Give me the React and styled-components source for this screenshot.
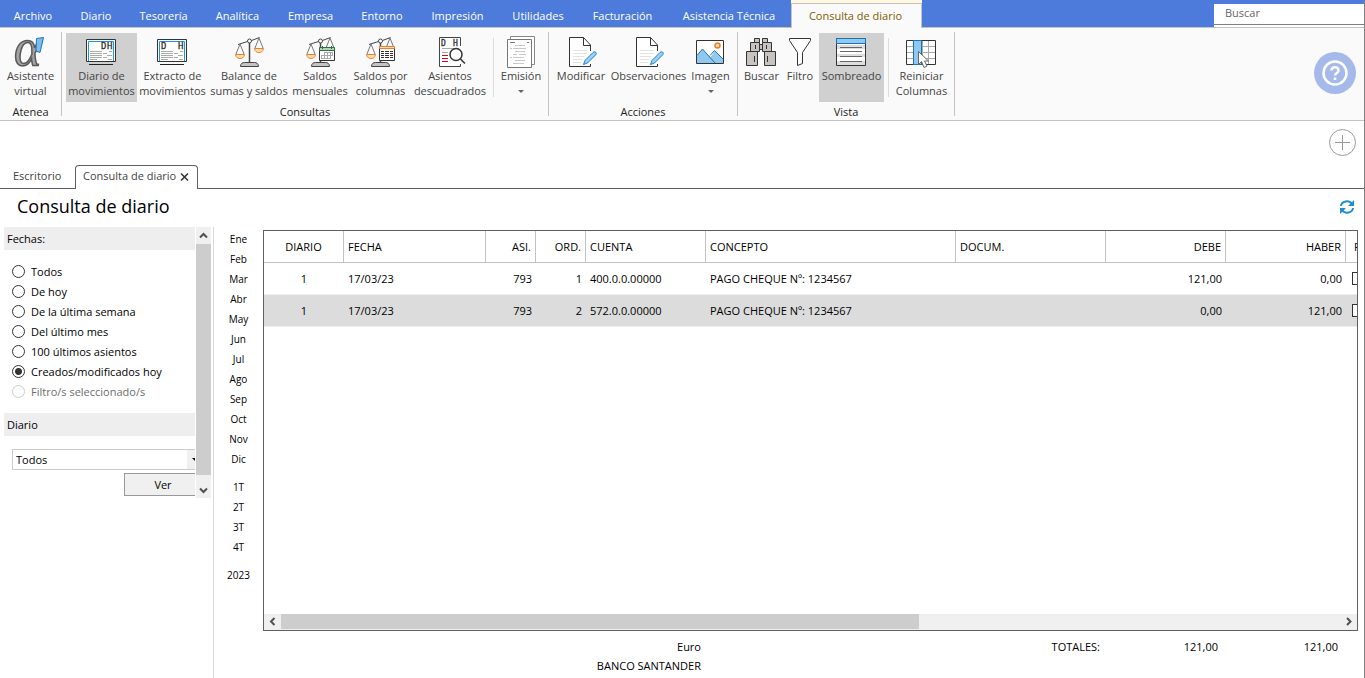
import { useState } from 'react'
import styled, { createGlobalStyle } from 'styled-components'

const GlobalStyle = createGlobalStyle`
  * {
    box-sizing: border-box;
  }

  body {
    margin: 0;
    background: #fff;
    color: #000;
    font-family: 'Open Sans', 'Noto Sans', sans-serif;
    font-size: 11px;
    line-height: 15px;
  }

  button,
  input,
  select {
    margin: 0;
    padding: 0;
    border: 0;
    background: none;
    color: inherit;
    font: inherit;
  }

  svg {
    display: block;
    flex: none;
  }
`

const Page = styled.div`
  display: flex;
  flex-direction: column;
  min-height: 100vh;
  border-right: 1px solid #808080;
`

/* top menu */

const MenuBar = styled.nav`
  display: flex;
  height: 28px;
  background: #4d7bdc;
  border-bottom: 1px solid #c3c3c3;
`

const MenuItem = styled.button`
  flex: none;
  width: ${p => p.$width}px;
  height: 27px;
  padding-top: 3px;
  color: #fff;
  white-space: nowrap;
`

const ActiveMenu = styled.div`
  flex: none;
  width: 131px;
  height: 28px;
  padding-top: 3px;
  background: #fff8e1;
`

const ActiveMenuItem = styled.button`
  width: 100%;
  height: 25px;
  padding: 0 2px 2px 0;
  background: #fafafa;
  border: 1px solid #c3c3c3;
  border-bottom: 0;
  color: #7f6000;
`

const SearchWrap = styled.div`
  width: 150px;
  height: 23px;
  margin: 4px 0 0 auto;
  background: #fff;
`

const SearchInput = styled.input`
  display: block;
  width: 100%;
  height: 21px;
  padding: 0 11px 4px;
  border-bottom: 1px solid #808080;
  outline: none;

  &::placeholder {
    color: #666;
    opacity: 1;
  }
`

/* ribbon */

const Ribbon = styled.div`
  display: flex;
  height: 93px;
  background: #fafafa;
  border-bottom: 1px solid #c3c3c3;
`

const Group = styled.section`
  flex: none;
  display: flex;
  flex-direction: column;
  height: 84px;
  margin-top: 4px;
  padding: 1px 4px 0;
  border-right: 1px solid #c3c3c3;
`

const GroupTitle = styled.div`
  flex: none;
  margin-top: 2px;
  text-align: center;
  color: #222;
`

const Tools = styled.div`
  flex: none;
  display: flex;
  height: 69px;
`

const Tool = styled.button`
  flex: none;
  display: flex;
  flex-direction: column;
  align-items: center;
  width: ${p => p.$width}px;
  padding-top: 3px;
  background: ${p => (p.$active ? '#d0d0d0' : 'none')};
  color: #444;
  text-align: center;
  white-space: pre;

  svg {
    margin-right: 1px;
  }
`

const Caret = styled.span`
  margin-top: 7px;
  border: 3px solid transparent;
  border-top-color: #666;
  border-bottom: 0;
`

const ToolDivider = styled.div`
  width: 1px;
  height: 59px;
  margin: 5px 4px 0;
  background: #dcdcdc;
`

const HelpButton = styled.button`
  display: grid;
  place-items: center;
  width: 42px;
  height: 42px;
  margin: 24px 8px 0 auto;
  border-radius: 50%;
  background: #a5b9ea;
`

/* document tabs */

const TabArea = styled.div`
  display: flex;
  justify-content: space-between;
  height: 68px;
  border-bottom: 1px solid #606060;
`

const DocTabs = styled.div`
  display: flex;
  align-items: flex-end;
`

const DocTab = styled.button`
  display: flex;
  align-items: center;
  gap: 4px;
  height: ${p => (p.$active ? 24 : 23)}px;
  width: ${p => p.$width}px;
  margin-bottom: ${p => (p.$active ? -1 : 0)}px;
  padding: 0 0 ${p => (p.$active ? 4 : 2)}px ${p => (p.$active ? 7 : 13)}px;
  border: ${p => (p.$active ? '1px solid #606060' : '0')};
  border-bottom: 0;
  border-radius: 4px 4px 0 0;
  background: #fff;
  color: #444;
  white-space: nowrap;

  svg {
    margin-top: 2px;
  }
`

const AddButton = styled.button`
  width: 27px;
  height: 27px;
  margin: 8px 8px 0 0;
`

const TitleRow = styled.header`
  display: flex;
  align-items: center;
  justify-content: space-between;
  height: 38px;
  padding: 0 9px 2px 17px;
`

const Title = styled.h1`
  margin: 0;
  padding-bottom: 2px;
  font-size: 18px;
  font-weight: 400;
  line-height: 24px;
`

/* body */

const Body = styled.main`
  flex: 1;
  display: flex;
`

const Sidebar = styled.aside`
  flex: none;
  display: flex;
  align-items: flex-start;
  width: 214px;
  padding-left: 4px;
  border-right: 1px solid #d9d9d9;
`

const SidebarContent = styled.form`
  width: 191px;
  margin-right: 1px;
  overflow: hidden;
`

const SectionTitle = styled.h2`
  display: block;
  margin: 0;
  height: 23px;
  padding: 4px 3px;
  background: #eee;
  font-size: 11px;
  font-weight: 400;
`

const RadioList = styled.div`
  padding: 11px 0 12px 8px;
`

const RadioLabel = styled.label`
  display: flex;
  align-items: center;
  gap: 6px;
  height: 20px;
  color: ${p => (p.$disabled ? '#6d6d6d' : '#000')};
  white-space: nowrap;
`

const Radio = styled.input`
  appearance: none;
  width: 13px;
  height: 13px;
  border: 1px solid #333;
  border-radius: 50%;
  background: #fff;

  &:checked {
    background: radial-gradient(circle, #333 3px, #fff 4px);
  }

  &:disabled {
    border-color: #ccc;
  }
`

const SelectBox = styled.div`
  display: flex;
  width: 198px;
  height: 21px;
  margin: 13px 0 3px 8px;
  border: 1px solid #ccc;
`

const Select = styled.select`
  appearance: none;
  width: 174px;
  padding-left: 3px;
  outline: none;
`

const SelectArrow = styled.span`
  flex: 1;
  padding: 8px 0 0 5px;
  background: #f0f0f0;

  &::after {
    content: '';
    display: block;
    width: 0;
    border: 3px solid transparent;
    border-top-color: #000;
    border-bottom: 0;
  }
`

const ViewButton = styled.button`
  width: 78px;
  height: 23px;
  margin-left: 120px;
  border: 1px solid #999;
  background: #f0f0f0;
`

const VScroll = styled.div`
  width: 15px;
  height: 271px;
  display: flex;
  flex-direction: column;
  background: #f0f0f0;
`

const VThumb = styled.div`
  flex: 1;
  background: #cdcdcd;
`

const ScrollArrow = styled.button`
  display: grid;
  place-items: center;
  flex: none;
  width: ${p => p.$width}px;
  height: ${p => p.$height}px;
`

const DownArrow = styled(ScrollArrow)`
  padding-top: 6px;
`

const Periods = styled.div`
  flex: none;
  display: flex;
  flex-direction: column;
  gap: 8px;
  width: 49px;
  padding-top: 2px;
`

const PeriodGroup = styled.div`
  display: flex;
  flex-direction: column;
`

const Period = styled.button`
  height: 20px;
  font-size: 10px;
`

const Results = styled.section`
  flex: 1;
  min-width: 0;
  display: flex;
  flex-direction: column;
  padding: 3px 6px 0 0;
`

const GridBox = styled.div`
  flex: 1;
  display: flex;
  flex-direction: column;
  border: 1px solid #606060;
`

const TableClip = styled.div`
  flex: 1;
  overflow: hidden;
`

const Table = styled.table`
  width: 1142px;
  table-layout: fixed;
  border-collapse: separate;
  border-spacing: 0;
`

const Th = styled.th`
  height: 32px;
  padding: 0 4px;
  border-right: 1px solid #c3c3c3;
  border-bottom: 1px solid #c3c3c3;
  font-weight: 400;
  text-align: ${p => p.$align};

  &:last-child {
    padding-left: 8px;
  }
`

const Td = styled.td`
  height: 32px;
  padding: 0 4px;
  border-bottom: 1px solid #eee;
  background: ${p => (p.$shaded ? '#dcdcdc' : '#fff')};
  text-align: ${p => p.$align};
  white-space: nowrap;
`

const RowCheck = styled.input`
  appearance: none;
  display: block;
  width: 13px;
  height: 13px;
  margin-left: 2px;
  border: 1px solid #333;
  background: #fff;
`

const HScroll = styled.div`
  display: flex;
  height: 16px;
  background: #f0f0f0;
`

const HTrack = styled.div`
  flex: 1;
  display: flex;
`

const HThumb = styled.div`
  flex: 3;
  height: 15px;
  margin-right: 4px;
  background: #cdcdcd;
`

const HRest = styled.div`
  flex: 2;
  margin-left: -8px;
`

const Totals = styled.footer`
  display: grid;
  grid-template-columns: 438px 1fr 118px 120px;
  grid-auto-rows: 19px;
  height: 47px;
  padding: 6px 20px 0 0;
  line-height: 19px;
  text-align: right;
`

/* icons */

const Icon = ({ children }) => (
  <svg width="32" height="32" viewBox="0 0 32 32" fill="none" aria-hidden="true">
    {children}
  </svg>
)

const AlphaIcon = () => (
  <Icon>
    <text
      x="0"
      y="29"
      fontFamily="Liberation Serif, serif"
      fontStyle="italic"
      fontSize="52"
      fill="#a3a3a3"
      stroke="#5a5a5a"
      strokeWidth="1.500"
    >
      α
    </text>
    <path d="M22.500 2.500l7-1-3.500 15-4-1.500z" fill="#7fbcec" stroke="#1f73b7" />
  </Icon>
)

const ScreenIcon = ({ split }) => (
  <Icon>
    <path d="M1.500 3.500h29v22h-29z" fill="#fff" stroke="#333" />
    <path d="M3.500 25V5.500h25V25" stroke="#1d9ad6" />
    <path d="M4 28.500h24" stroke="#222" />
    <path
      d="M5 15.500h12M5 17.500h12M5 19.500h12M5 21.500h12M5 23.500h7M18 17.500h4M24 15.500h3M22 19.500h5M18 21.500h4M23 23.500h4"
      stroke="#aaa"
    />
    <g fontFamily="DejaVu Sans Mono, monospace" fontSize="9" fill="#333" stroke="#333" strokeWidth=".3">
      <text x={split ? 5 : 16} y="13">D</text>
      <text x="22" y="13">H</text>
    </g>
  </Icon>
)

const ScaleBase = ({ rightPan }) => (
  <>
    <path d="M16.500 6v20" stroke="#444" strokeWidth="1.500" />
    <path d="M5 8.500l9.500-3M18.500 4.500l8-3" stroke="#444" />
    <circle cx="16.500" cy="5" r="2" fill="#fff" stroke="#444" />
    <path d="M7 8l-4 10M7 8l4 10" stroke="#777" />
    <path d="M2.500 18.500h9c-.5 3-2.500 4-4.500 4s-4-1-4.500-4z" fill="#fde0a8" stroke="#ed7d31" />
    <path d="M26 2l-4 10M26 2l4 10" stroke="#777" />
    {rightPan && (
      <path d="M21.500 12.500h9c-.5 3-2.500 4-4.500 4s-4-1-4.500-4z" fill="#fde0a8" stroke="#ed7d31" />
    )}
    <path d="M7.500 30.500c0-3 2-4 4-4h10c2 0 4 1 4 4z" fill="#c4c4c4" stroke="#444" />
  </>
)

const BalanceIcon = () => (
  <Icon>
    <ScaleBase rightPan />
  </Icon>
)

const MonthlyIcon = () => (
  <Icon>
    <ScaleBase />
    <path d="M15.500 12.500h15v12h-15z" fill="#fff" stroke="#333" />
    <path d="M15.500 11.500h15v3h-15z" fill="#a9d8ae" stroke="#35694b" />
    <path d="M18.500 10v3M27.500 10v3" stroke="#35694b" />
    <path d="M20 16.500h9M17 19.500h12M17 22.500h9M17.500 19v4M20.500 16v7M23.500 16v7M26.500 16v7M28.500 16v4" stroke="#aaa" />
  </Icon>
)

const ColumnsBalanceIcon = () => (
  <Icon>
    <ScaleBase />
    <path d="M15.500 11.500h15v13h-15z" fill="#fff" stroke="#333" />
    <path d="M15.500 10.500h15v2h-15z" fill="#fde0a8" stroke="#ed7d31" />
    <path
      d="M17 15.500h3M17 17.500h3M17 19.500h3M17 21.500h3M21 15.500h4M21 17.500h4M21 19.500h4M21 21.500h4M26 15.500h3M26 17.500h3M26 19.500h3M26 21.500h3"
      stroke="#333"
    />
  </Icon>
)

const UnbalancedIcon = () => (
  <Icon>
    <path d="M26.500 10V1.500h-21v29h21V28" fill="#fff" stroke="#444" />
    <path d="M8 12.500h17M8 16.500h6" stroke="#aaa" />
    <path d="M8 19.500h6M8 22.500h6M8 25.500h6" stroke="#e2001a" />
    <circle cx="22" cy="18.500" r="6" fill="#fff" stroke="#333" strokeWidth="1.500" />
    <path d="M26.500 23l4.500 4.500" stroke="#333" strokeWidth="1.500" />
    <g fontFamily="DejaVu Sans Mono, monospace" fontSize="8" fill="#333" stroke="#333" strokeWidth=".3">
      <text x="7" y="10">D</text>
      <text x="19" y="10">H</text>
    </g>
  </Icon>
)

const PrintIcon = () => (
  <Icon>
    <path d="M5.500 4V.5h24v28H27" fill="#fff" stroke="#888" />
    <path d="M2.500 3.500h24v28h-24z" fill="#fff" stroke="#777" />
    <path d="M5 6.500h5M22 6.500h2" stroke="#777" />
    <path
      d="M10 9.500h10M10 15.500h10M5 12.500h2M8 12.500h13M8 18.500h4M14 18.500h7M5 21.500h2M8 21.500h11M10 24.500h10M8 27.500h11"
      stroke="#c8c8c8"
    />
  </Icon>
)

const EditIcon = () => (
  <Icon>
    <path d="M25.500 28v2.500h-21v-29h14l7 7.500v6" fill="#fff" stroke="#333" />
    <path d="M18.500 1.500v8h7" stroke="#333" />
    <path d="M8 14.500h14M8 17.500h14M8 20.500h11M8 23.500h9M8 26.500h8" stroke="#e2e2e2" />
    <path
      d="M18.500 28.500l1.500-4 8-8c2-2 4.500.5 2.500 2.500l-8 8z"
      fill="#9ad0f3"
      stroke="#1a83c7"
    />
  </Icon>
)

const ImageIcon = () => (
  <Icon>
    <path d="M2.500 4.500h27v23h-27z" fill="#fff" stroke="#333" />
    <path d="M3 19.500l5.500-6.500 8 8.500 4-6.500 8.500 8V27H3z" fill="#91c8ef" />
    <path d="M3 19.500l5.500-6.500L21 27M16 19.500l4.500-5L29 23" stroke="#1a73b7" />
    <circle cx="23.500" cy="9.500" r="2.500" fill="#fde0a8" stroke="#ed7d31" strokeWidth="1.500" />
  </Icon>
)

const BinocularsIcon = () => (
  <Icon>
    <g fill="#c6c3c1" stroke="#333">
      <path d="M9.500 2.500h5v4h-5zM17.500 2.500h5v4h-5zM5.500 6.500h9v9h-9zM17.500 6.500h9v9h-9z" />
      <path d="M14.500 8.500h3v5h-3z" />
      <path d="M1.500 15.500h11v14h-11zM19.500 15.500h11v14h-11z" />
      <path d="M9.500 20v6M22.500 20v6M10.500 9v4M21.500 9v4" />
    </g>
  </Icon>
)

const FilterIcon = () => (
  <Icon>
    <path
      d="M5.500 2.500h21v2l-8 12v11l-5 2v-13l-8-12z"
      fill="#fff"
      stroke="#333"
      strokeLinejoin="round"
    />
  </Icon>
)

const ShadingIcon = () => (
  <Icon>
    <path d="M1.500 2.500h29v27h-29z" fill="#fff" stroke="#333" />
    <path d="M2 9h28v4H2zM2 18h28v3H2zM2 25h28v4H2z" fill="#ddd" />
    <path d="M1.500 2.500h29v5h-29z" fill="#91c8ef" stroke="#1a73b7" />
    <path d="M5 11.500h22M5 15.500h22M5 20.500h22M5 25.500h22" stroke="#666" />
  </Icon>
)

const ResetColumnsIcon = () => (
  <Icon>
    <path d="M1.500 4.500h29v24h-29z" fill="#fff" stroke="#333" />
    <path d="M2 10.500h28M2 16.500h28M2 22.500h28M17.500 5v23M23.500 5v23" stroke="#aaa" />
    <path d="M8.500 4.500h8v24h-8z" fill="#91c8ef" stroke="#1a73b7" />
    <path
      d="M13.500 15.500v13l3-3 2.500 6 3-1.500-2.500-5h4z"
      fill="#fff"
      stroke="#666"
    />
  </Icon>
)

const Chevron = ({ d }) => (
  <svg width="9" height="9" viewBox="0 0 9 9" fill="none" aria-hidden="true">
    <path d={d} stroke="#505050" strokeWidth="2" />
  </svg>
)

const HelpIcon = () => (
  <svg width="26" height="26" viewBox="0 0 26 26" fill="none" stroke="#fff" aria-hidden="true">
    <circle cx="13" cy="13" r="11.500" strokeWidth="2.500" />
    <path d="M9.500 10.500c0-4.500 7-4.500 7 0 0 2.500-3.500 2.500-3.500 5" strokeWidth="2.500" />
    <path d="M13 17.500v2.500" strokeWidth="2.500" />
  </svg>
)

const AddIcon = () => (
  <svg width="27" height="27" viewBox="0 0 27 27" fill="none" stroke="#999" aria-hidden="true">
    <circle cx="13.500" cy="13.500" r="13" />
    <path d="M6 13.500h15M13.500 6v15" />
  </svg>
)

const RefreshIcon = () => (
  <svg width="16" height="14" viewBox="0 0 16 14" fill="none" aria-hidden="true">
    <path d="M2 6c.5-5 8-6.500 11-2M14 8c-.5 5-8 6.500-11 2" stroke="#1e8fd0" strokeWidth="2" />
    <path d="M15 0v6H9zM1 14V8h6z" fill="#1e8fd0" />
  </svg>
)

const CloseIcon = () => (
  <svg width="9" height="8" viewBox="0 0 9 8" aria-hidden="true">
    <path d="M1 .5l7 7M8 .5l-7 7" stroke="#333" strokeWidth="1.500" />
  </svg>
)

/* data */

const MENU = [
  ['Archivo', 66],
  ['Diario', 60],
  ['Tesorería', 75],
  ['Analítica', 73],
  ['Empresa', 73],
  ['Entorno', 70],
  ['Impresión', 81],
  ['Utilidades', 80],
  ['Facturación', 89],
  ['Asistencia Técnica', 124]
]

const GROUPS = [
  {
    title: 'Atenea',
    tools: [{ label: 'Asistente\nvirtual', width: 53, icon: <AlphaIcon /> }]
  },
  {
    title: 'Consultas',
    tools: [
      { label: 'Diario de\nmovimientos', width: 71, icon: <ScreenIcon />, active: true },
      { label: 'Extracto de\nmovimientos', width: 71, icon: <ScreenIcon split /> },
      { label: 'Balance de\nsumas y saldos', width: 82, icon: <BalanceIcon /> },
      { label: 'Saldos\nmensuales', width: 60, icon: <MonthlyIcon /> },
      { label: 'Saldos por\ncolumnas', width: 61, icon: <ColumnsBalanceIcon /> },
      { label: 'Asientos\ndescuadrados', width: 78, icon: <UnbalancedIcon /> },
      { label: 'Emisión', width: 46, icon: <PrintIcon />, menu: true, divider: true }
    ]
  },
  {
    title: 'Acciones',
    tools: [
      { label: 'Modificar', width: 56, icon: <EditIcon /> },
      { label: 'Observaciones', width: 79, icon: <EditIcon /> },
      { label: 'Imagen', width: 45, icon: <ImageIcon />, menu: true }
    ]
  },
  {
    title: 'Vista',
    tools: [
      { label: 'Buscar', width: 39, icon: <BinocularsIcon /> },
      { label: 'Filtro', width: 38, icon: <FilterIcon /> },
      { label: 'Sombreado', width: 65, icon: <ShadingIcon />, active: true },
      { label: 'Reiniciar\nColumnas', width: 57, icon: <ResetColumnsIcon />, divider: true }
    ]
  }
]

const DATES = [
  'Todos',
  'De hoy',
  'De la última semana',
  'Del último mes',
  '100 últimos asientos',
  'Creados/modificados hoy',
  'Filtro/s seleccionado/s'
]

const PERIODS = [
  ['Ene', 'Feb', 'Mar', 'Abr', 'May', 'Jun', 'Jul', 'Ago', 'Sep', 'Oct', 'Nov', 'Dic'],
  ['1T', '2T', '3T', '4T'],
  ['2023']
]

const COLUMNS = [
  { name: 'DIARIO', width: 80, align: 'center' },
  { name: 'FECHA', width: 142, align: 'left' },
  { name: 'ASI.', width: 50, align: 'right' },
  { name: 'ORD.', width: 50, align: 'right' },
  { name: 'CUENTA', width: 120, align: 'left' },
  { name: 'CONCEPTO', width: 250, align: 'left' },
  { name: 'DOCUM.', width: 150, align: 'left' },
  { name: 'DEBE', width: 120, align: 'right' },
  { name: 'HABER', width: 120, align: 'right' }
]

const ROWS = [
  ['1', '17/03/23', '793', '1', '400.0.0.00000', 'PAGO CHEQUE Nº: 1234567', '', '121,00', '0,00'],
  ['1', '17/03/23', '793', '2', '572.0.0.00000', 'PAGO CHEQUE Nº: 1234567', '', '0,00', '121,00']
]

const RibbonTool = ({ tool }) => (
  <>
    {tool.divider && <ToolDivider />}
    <Tool type="button" $width={tool.width} $active={tool.active}>
      {tool.icon}
      <span>{tool.label}</span>
      {tool.menu && <Caret />}
    </Tool>
  </>
)

const Filters = () => {
  const [date, setDate] = useState('Creados/modificados hoy')

  return (
    <Sidebar>
      <SidebarContent>
        <SectionTitle>Fechas:</SectionTitle>
        <RadioList>
          {DATES.map((name, i) => (
            <RadioLabel key={name} $disabled={i === 6}>
              <Radio
                type="radio"
                name="date"
                checked={date === name}
                disabled={i === 6}
                onChange={() => setDate(name)}
              />
              {name}
            </RadioLabel>
          ))}
        </RadioList>
        <SectionTitle as="label" htmlFor="journal">
          Diario
        </SectionTitle>
        <SelectBox>
          <Select id="journal">
            <option>Todos</option>
          </Select>
          <SelectArrow />
        </SelectBox>
        <ViewButton type="button">Ver</ViewButton>
      </SidebarContent>
      <VScroll>
        <ScrollArrow type="button" aria-label="Subir" $width={15} $height={17}>
          <Chevron d="M1 6.500l3.500-3.500 3.500 3.500" />
        </ScrollArrow>
        <VThumb />
        <DownArrow type="button" aria-label="Bajar" $width={15} $height={23}>
          <Chevron d="M1 3.500l3.500 3.500 3.500-3.500" />
        </DownArrow>
      </VScroll>
    </Sidebar>
  )
}

const Journal = () => (
  <Results>
    <GridBox>
      <TableClip>
        <Table>
          <colgroup>
            {COLUMNS.map(col => (
              <col key={col.name} width={col.width} />
            ))}
            <col width="60" />
          </colgroup>
          <thead>
            <tr>
              {COLUMNS.map(col => (
                <Th key={col.name} $align={col.align}>
                  {col.name}
                </Th>
              ))}
              <Th $align="left">P</Th>
            </tr>
          </thead>
          <tbody>
            {ROWS.map((row, i) => (
              <tr key={row[3]}>
                {row.map((cell, j) => (
                  <Td key={COLUMNS[j].name} $align={COLUMNS[j].align} $shaded={i % 2 === 1}>
                    {cell}
                  </Td>
                ))}
                <Td $align="left" $shaded={i % 2 === 1}>
                  <RowCheck type="checkbox" aria-label="Punteado" />
                </Td>
              </tr>
            ))}
          </tbody>
        </Table>
      </TableClip>
      <HScroll>
        <ScrollArrow type="button" aria-label="Izquierda" $width={17} $height={15}>
          <Chevron d="M6.500 1l-3.500 3.500 3.500 3.500" />
        </ScrollArrow>
        <HTrack>
          <HThumb />
          <HRest />
        </HTrack>
        <ScrollArrow type="button" aria-label="Derecha" $width={17} $height={15}>
          <Chevron d="M3 1l3.500 3.500-3.500 3.500" />
        </ScrollArrow>
      </HScroll>
    </GridBox>
    <Totals>
      <span>Euro</span>
      <span>TOTALES:</span>
      <span>121,00</span>
      <span>121,00</span>
      <span>BANCO SANTANDER</span>
    </Totals>
  </Results>
)

const App = () => (
  <>
    <GlobalStyle />
    <Page>
      <MenuBar>
        {MENU.map(([name, width]) => (
          <MenuItem key={name} type="button" $width={width}>
            {name}
          </MenuItem>
        ))}
        <ActiveMenu>
          <ActiveMenuItem type="button">Consulta de diario</ActiveMenuItem>
        </ActiveMenu>
        <SearchWrap>
          <SearchInput type="text" placeholder="Buscar" aria-label="Buscar" />
        </SearchWrap>
      </MenuBar>
      <Ribbon>
        {GROUPS.map(group => (
          <Group key={group.title}>
            <Tools>
              {group.tools.map(tool => (
                <RibbonTool key={tool.label} tool={tool} />
              ))}
            </Tools>
            <GroupTitle>{group.title}</GroupTitle>
          </Group>
        ))}
        <HelpButton type="button" aria-label="Ayuda">
          <HelpIcon />
        </HelpButton>
      </Ribbon>
      <TabArea>
        <DocTabs>
          <DocTab type="button" $width={75}>
            Escritorio
          </DocTab>
          <DocTab type="button" $width={123} $active>
            Consulta de diario
            <CloseIcon />
          </DocTab>
        </DocTabs>
        <AddButton type="button" aria-label="Añadir">
          <AddIcon />
        </AddButton>
      </TabArea>
      <TitleRow>
        <Title>Consulta de diario</Title>
        <button type="button" aria-label="Actualizar">
          <RefreshIcon />
        </button>
      </TitleRow>
      <Body>
        <Filters />
        <Periods>
          {PERIODS.map(group => (
            <PeriodGroup key={group[0]}>
              {group.map(name => (
                <Period key={name} type="button">
                  {name}
                </Period>
              ))}
            </PeriodGroup>
          ))}
        </Periods>
        <Journal />
      </Body>
    </Page>
  </>
)

export default App
